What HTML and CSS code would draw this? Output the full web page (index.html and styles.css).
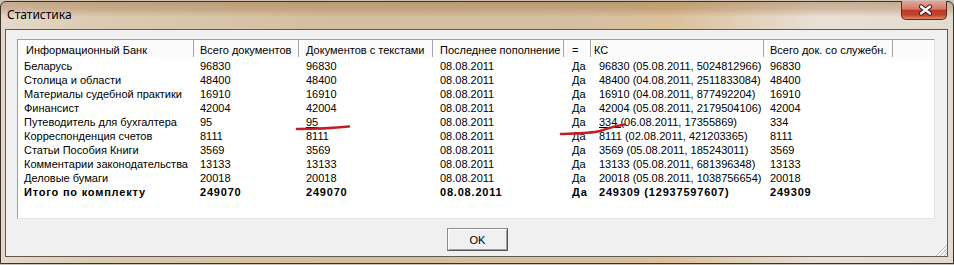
FILE: index.html
```html
<!DOCTYPE html>
<html lang="ru">

<head>
    <meta charset="utf-8">
    <title>Статистика</title>
    <link rel="stylesheet" href="styles.css">
</head>

<body>
    <div class="window">

        <div class="titlebar">
            <span class="title">Статистика</span>
            <div class="close">
                <svg width="46" height="18" viewBox="0 0 46 18">
                    <path d="M19 5.5 L28 12.5 M28 5.5 L19 12.5" stroke="#3b1812" stroke-width="4.4" stroke-linecap="round" />
                    <path d="M19 5.5 L28 12.5 M28 5.5 L19 12.5" stroke="#fff" stroke-width="2.4" stroke-linecap="round" />
                </svg>
            </div>
        </div>

        <div class="client">
            <div class="list">
                <div class="head">
                    <span>Информационный Банк</span>
                    <span>Всего документов</span>
                    <span>Документов с текстами</span>
                    <span>Последнее пополнение</span>
                    <span>=</span>
                    <span>КС</span>
                    <span>Всего док. со служебн.</span>
                    <span class="empty"></span>
                </div>

                <div class="rows">
                    <div class="row"><span>Беларусь</span><span>96830</span><span>96830</span><span>08.08.2011</span><span>Да</span><span>96830 (05.08.2011, 5024812966)</span><span>96830</span></div>
                    <div class="row"><span>Столица и области</span><span>48400</span><span>48400</span><span>08.08.2011</span><span>Да</span><span>48400 (04.08.2011, 2511833084)</span><span>48400</span></div>
                    <div class="row"><span>Материалы судебной практики</span><span>16910</span><span>16910</span><span>08.08.2011</span><span>Да</span><span>16910 (04.08.2011, 877492204)</span><span>16910</span></div>
                    <div class="row"><span>Финансист</span><span>42004</span><span>42004</span><span>08.08.2011</span><span>Да</span><span>42004 (05.08.2011, 2179504106)</span><span>42004</span></div>
                    <div class="row"><span>Путеводитель для бухгалтера</span><span>95</span><span><u>95</u></span><span>08.08.2011</span><span>Да</span><span><u>334 (</u>06.08.2011, 17355869)</span><span>334</span></div>
                    <div class="row"><span>Корреспонденция счетов</span><span>8111</span><span>8111</span><span>08.08.2011</span><span>Да</span><span>8111 (02.08.2011, 421203365)</span><span>8111</span></div>
                    <div class="row"><span>Статьи Пособия Книги</span><span>3569</span><span>3569</span><span>08.08.2011</span><span>Да</span><span>3569 (05.08.2011, 185243011)</span><span>3569</span></div>
                    <div class="row"><span>Комментарии законодательства</span><span>13133</span><span>13133</span><span>08.08.2011</span><span>Да</span><span>13133 (05.08.2011, 681396348)</span><span>13133</span></div>
                    <div class="row"><span>Деловые бумаги</span><span>20018</span><span>20018</span><span>08.08.2011</span><span>Да</span><span>20018 (05.08.2011, 1038756654)</span><span>20018</span></div>
                    <div class="row total"><span>Итого по комплекту</span><span>249070</span><span>249070</span><span>08.08.2011</span><span>Да</span><span>249309 (12937597607)</span><span>249309</span></div>
                </div>
            </div>

            <div class="footer">
                <button class="ok">OK</button>
            </div>

            <svg class="grip" width="12" height="12" viewBox="0 0 12 12">
                <path d="M12 1 L1 12 M12 5 L5 12 M12 9 L9 12" stroke="#b4b4b4" stroke-width="1" />
                <path d="M12 2 L2 12 M12 6 L6 12 M12 10 L10 12" stroke="#fff" stroke-width="1" />
            </svg>
        </div>

        <!-- red pen marks drawn over the screenshot -->
        <svg class="marks" width="954" height="265" viewBox="0 0 954 265">
            <path d="M297 129 C 312 129, 330 128.5, 349 126.5" />
            <path d="M561 134 C 575 133.5, 590 133.5, 600 131 C 607 129, 612 126, 625 124.5" />
        </svg>
    </div>
</body>

</html>
```

FILE: styles.css
```css
html {
    background-color: #cbc3b8;
}

body {
    margin: 0;
    font-family: "Liberation Sans", Arial, sans-serif;
}

.window {
    width: 954px;
    height: 263px;
    margin-top: 1px;
    box-sizing: border-box;
    border: 1px solid #3a332b;
    border-radius: 6px 6px 0 0;
    display: flex;
    flex-direction: column;
    position: relative;
    background:
        linear-gradient(to bottom, rgba(150, 100, 45, 0.4) 0, rgba(150, 100, 45, 0.3) 7px, rgba(150, 100, 45, 0) 15px),
        linear-gradient(to right, #e6d9ca 0, #dccab2 10%, #d4bea0 35%, #d6c0a2 62%, #dbc09a 70%, #e2d0b8 78%, #e9e0d6 86%, #e4dbd0 100%);
}

.titlebar {
    height: 27px;
    flex: none;
    display: flex;
}

.title {
    font-family: "Noto Sans", sans-serif;
    font-size: 12px;
    line-height: 16px;
    padding: 5px 0 0 6px;
    color: #000;
}

.close {
    margin: -1px 6px 0 auto;
    width: 46px;
    height: 19px;
    box-sizing: border-box;
    border: 1px solid #5e2a20;
    border-top: none;
    border-radius: 0 0 5px 5px;
    background: linear-gradient(#e6a496 0%, #d5786a 45%, #bd3a28 52%, #c4442e 78%, #e08a6a 100%);
}

.close svg {
    display: block;
}

.client {
    flex: 1;
    margin: 0 5px 6px 4px;
    border: 1px solid #625a50;
    background-color: #f0f0f0;
    display: flex;
    flex-direction: column;
    position: relative;
}

.list {
    flex: none;
    height: 180px;
    margin: 9px 12px 0 11px;
    box-sizing: border-box;
    background-color: #fff;
    border: 1px solid;
    border-color: #a0a0a0 #e3e3e3 #e3e3e3 #a0a0a0;
    font-size: 11px;
    color: #000;
    overflow: hidden;
}

.head,
.row {
    display: grid;
    grid-template-columns: 176px 105px 134px 131px 27px 173px 129px 1fr;
}

.head {
    height: 17px;
    background-color: #fbfbfb;
}

.head span {
    border-right: 1px solid #a5a5a5;
    padding-top: 3px;
    line-height: 14px;
    white-space: nowrap;
    overflow: hidden;
}

.head .empty {
    border-right: none;
}

.rows {
    padding-top: 2px;
}

.row {
    height: 14px;
    line-height: 14px;
}

.row span {
    white-space: nowrap;
    overflow: hidden;
}

/* text offsets inside the columns */
.row span:nth-child(1) { padding-left: 6px; }
.row span:nth-child(2) { padding-left: 6px; }
.row span:nth-child(3) { padding-left: 7px; }
.row span:nth-child(4) { padding-left: 7px; }
.row span:nth-child(5) { padding-left: 8px; }
.row span:nth-child(6) { padding-left: 8px; }
.row span:nth-child(7) { padding-left: 6px; }

.head span:nth-child(1) { padding-left: 8px; }
.head span:nth-child(2) { padding-left: 6px; }
.head span:nth-child(3) { padding-left: 7px; }
.head span:nth-child(4) { padding-left: 7px; }
.head span:nth-child(5) { padding-left: 8px; }
.head span:nth-child(6) { padding-left: 3px; }
.head span:nth-child(7) { padding-left: 6px; }

.total {
    font-weight: bold;
    letter-spacing: 0.8px;
}

.footer {
    flex: 1;
    display: flex;
    justify-content: center;
    padding-top: 9px;
}

.ok {
    width: 61px;
    height: 23px;
    margin-left: 2px;
    padding: 0;
    font-family: "Liberation Sans", Arial, sans-serif;
    font-size: 11px;
    color: #000;
    background-color: #f0f0f0;
    border: 1px solid;
    border-color: #8c8c8c #555 #555 #8c8c8c;
    box-shadow: inset 1px 1px 0 #fff, inset -1px -1px 0 #a0a0a0;
}

.grip {
    position: absolute;
    right: 0;
    bottom: 0;
}

.marks {
    position: absolute;
    top: -2px;
    left: -1px;
    pointer-events: none;
}

.marks path {
    fill: none;
    stroke: #c41e24;
    stroke-width: 2.6;
    stroke-linecap: round;
}
```
